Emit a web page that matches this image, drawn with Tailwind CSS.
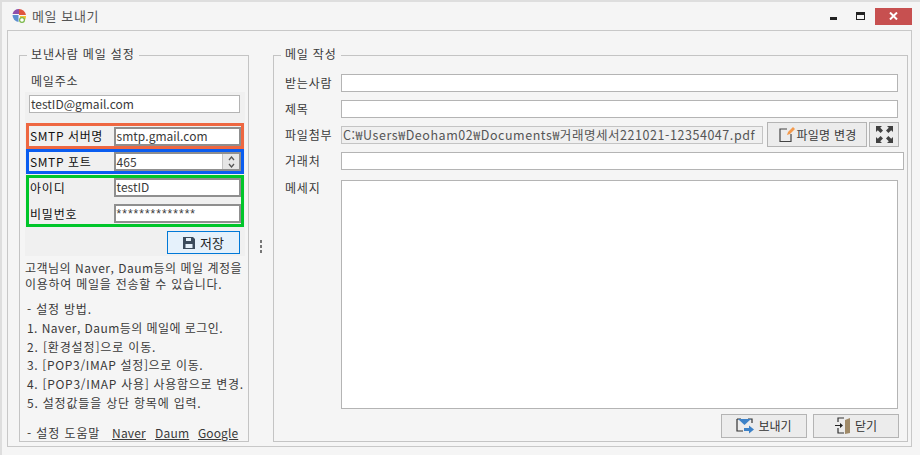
<!DOCTYPE html>
<html lang="ko">
<head>
<meta charset="UTF-8">
<title>메일 보내기</title>
<script src="https://cdn.jsdelivr.net/npm/@tailwindcss/browser@4"></script>
</head>
<body class="overflow-hidden bg-[#f5f5f5]">
<div class="flex h-[455px] w-[920px] flex-col border-2 border-b-0 border-r-0 border-[#dedede] bg-[#f5f5f5] font-['Noto_Sans_CJK_KR','Liberation_Sans',sans-serif] text-[12px] leading-[16px] text-[#3a3a3a]">

  <!-- title bar -->
  <div class="flex h-[28px] shrink-0 items-center">
    <svg class="ml-[9px] h-[16px] w-[16px]" viewBox="0 0 16 16">
      <path d="M8 1A7 7 0 0 0 1.5 6H8z" fill="#8e4fa8"/>
      <path d="M8 1A7 7 0 0 1 15 7H8z" fill="#e0553f"/>
      <path d="M1.5 7H7.5V14A7 7 0 0 1 1.5 7z" fill="#5b8fd0"/>
      <path d="M9 8H15A7 7 0 0 1 12 14H9z" fill="#f2c230"/>
      <circle cx="11" cy="12" r="2.4" fill="#fff" stroke="#79b84a" stroke-width="1.2"/>
    </svg>
    <span class="ml-[5px] text-[13px] tracking-[0.6px] text-[#555]">메일 보내기</span>
    <div class="ml-auto flex h-[17px] items-center">
      <span class="h-[3px] w-[7px] translate-y-[2px] bg-[#222]"></span>
      <span class="ml-[19px] h-[8px] w-[9px] border border-t-[3px] border-[#222]"></span>
      <span class="ml-[10px] flex h-[17px] w-[37px] items-center justify-center bg-[#c75050]">
        <svg class="h-[8px] w-[9px]" viewBox="0 0 9 8"><path d="M1 0.5L8 7.5M8 0.5L1 7.5" stroke="#fff" stroke-width="2"/></svg>
      </span>
      <span class="w-[8px]"></span>
    </div>
  </div>

  <!-- body -->
  <div class="ml-[5px] mr-[8px] flex h-[417px] w-[905px] border border-[#c8c8c8] pl-[11px] pt-[24px]">

    <!-- left group -->
    <div class="relative h-[387px] w-[230px] shrink-0 border border-[#c4c4c4]">
      <span class="absolute left-[7px] top-[-10px] bg-[#f5f5f5] px-[4px] tracking-[0.85px]">보낸사람 메일 설정</span>
      <div class="ml-[11px] mt-[17px] h-[19px] tracking-[0.8px]">메일주소</div>
      <div class="ml-[5px] h-[164px] w-[220px] bg-[#f0f0f0] pt-[3px]">
        <div class="ml-[4px] h-[18px] w-[211px] border border-[#b4b4b4] bg-white pl-[1px] leading-[16px]">testID@gmail.com</div>

        <div class="ml-[1px] mt-[10px] flex h-[26px] w-[218px] items-center border-[3px] border-[#ee6741]">
          <span class="ml-[1px] w-[84px] tracking-[0.6px] text-[#111]">SMTP 서버명</span>
          <span class="h-[19px] w-[128px] border-2 border-[#8f8f8f] bg-white pl-[1px] leading-[14px]">smtp.gmail.com</span>
        </div>
        <div class="ml-[1px] flex h-[25px] w-[218px] items-center border-[3px] border-[#0a5df0]">
          <span class="ml-[1px] w-[84px] tracking-[0.6px] text-[#111]">SMTP 포트</span>
          <span class="flex h-[19px] w-[128px] items-center border-2 border-[#8f8f8f] bg-white pl-[1px] leading-[14px]">465
            <span class="ml-auto flex h-[15px] w-[17px] flex-col items-center justify-center gap-[2px] border-l border-[#c4c4c4] bg-[#e6e6e6]">
              <svg class="h-[5px] w-[7px]" viewBox="0 0 7 5"><path d="M1 4L3.5 1L6 4" fill="none" stroke="#555" stroke-width="1.3"/></svg>
              <svg class="h-[5px] w-[7px]" viewBox="0 0 7 5"><path d="M1 1L3.5 4L6 1" fill="none" stroke="#555" stroke-width="1.3"/></svg>
            </span>
          </span>
        </div>
        <div class="ml-[1px] mt-[1px] flex h-[52px] w-[218px] flex-col gap-[7px] border-[3px] border-[#00c62a]">
          <div class="flex h-[19px] items-center">
            <span class="ml-[1px] w-[84px] tracking-[0.8px] text-[#111]">아이디</span>
            <span class="h-[19px] w-[128px] border-2 border-[#8f8f8f] bg-white pl-[1px] leading-[14px]">testID</span>
          </div>
          <div class="flex h-[19px] items-center">
            <span class="ml-[1px] w-[84px] tracking-[0.8px] text-[#111]">비밀번호</span>
            <span class="h-[19px] w-[128px] border-2 border-[#8f8f8f] bg-white pl-[1px] font-['Liberation_Sans'] leading-[17px] tracking-[1px]">**************</span>
          </div>
        </div>
        <div class="ml-[142px] mt-[4px] flex h-[23px] w-[73px] items-center justify-center gap-[5px] border border-[#0078d7] bg-[#e5f1fb]">
          <svg class="h-[12px] w-[12px]" viewBox="0 0 12 12"><path d="M0 0H10L12 2V12H0z" fill="#3b4b5c"/><rect x="3" y="1" width="5" height="3" fill="#e5f1fb"/><rect x="2.500" y="7" width="7" height="4" fill="#e5f1fb"/></svg>
          <span class="text-[13px] text-[#222]">저장</span>
        </div>
      </div>
      <div class="ml-[5px] mt-[4px] leading-[15.5px] tracking-[0.5px]">
        <p>고객님의 Naver, Daum등의 메일 계정을</p>
        <p class="tracking-[0.75px]">이용하여 메일을 전송할 수 있습니다.</p>
      </div>
      <div class="ml-[7px] mt-[9px] leading-[18.8px] tracking-[0.6px]">
        <p class="tracking-[0.8px]">- 설정 방법.</p>
        <p class="tracking-[0.45px]">1. Naver, Daum등의 메일에 로그인.</p>
        <p class="tracking-[0.85px]">2. [환경설정]으로 이동.</p>
        <p class="tracking-[0.65px]">3. [POP3/IMAP 설정]으로 이동.</p>
        <p class="whitespace-nowrap tracking-[0.7px]">4. [POP3/IMAP 사용] 사용함으로 변경.</p>
        <p class="tracking-[0.8px]">5. 설정값들을 상단 항목에 입력.</p>
        <p class="mt-[11px] flex">
          <span class="w-[85px] tracking-[0.9px]">- 설정 도움말</span>
          <span class="w-[43px] tracking-[0.2px] underline">Naver</span>
          <span class="w-[43px] tracking-[0.2px] underline">Daum</span>
          <span class="tracking-[0.1px] underline">Google</span>
        </p>
      </div>
    </div>

    <!-- splitter -->
    <div class="flex h-[387px] w-[24px] shrink-0 flex-col items-center justify-center gap-[2px] pb-[5px]">
      <span class="h-[3px] w-[2px] bg-[#777]"></span>
      <span class="h-[3px] w-[2px] bg-[#777]"></span>
      <span class="h-[3px] w-[2px] bg-[#777]"></span>
    </div>

    <!-- right group -->
    <div class="relative h-[387px] w-[635px] shrink-0 border border-[#c4c4c4]">
      <span class="absolute left-[7px] top-[-10px] bg-[#f5f5f5] px-[4px] tracking-[0.8px]">메일 작성</span>

      <div class="mt-[18px] flex h-[18px] items-center">
        <span class="ml-[11px] w-[56px] tracking-[0.8px]">받는사람</span>
        <span class="h-[18px] w-[557px] border border-[#b4b4b4] bg-white"></span>
      </div>
      <div class="mt-[8px] flex h-[18px] items-center">
        <span class="ml-[11px] w-[56px] tracking-[0.8px]">제목</span>
        <span class="h-[18px] w-[557px] border border-[#b4b4b4] bg-white"></span>
      </div>
      <div class="mt-[4px] flex h-[25px] items-center">
        <span class="ml-[11px] w-[56px] tracking-[0.8px]">파일첨부</span>
        <span class="h-[18px] w-[422px] overflow-hidden whitespace-nowrap border border-[#c4c4c4] bg-[#f0f0f0] pl-[1px] text-[12.5px] leading-[16px] tracking-[0.55px] text-[#555]">C:₩Users₩Deoham02₩Documents₩거래명세서221021-12354047.pdf</span>
        <span class="ml-[4px] flex h-[25px] w-[100px] items-center justify-center gap-[1px] border border-[#b4b4b4] bg-[#ececec]">
          <svg class="h-[17px] w-[18px]" viewBox="0 0 18 17"><path d="M9 3H2V15.500H13V8" fill="none" stroke="#444" stroke-width="1.2"/><path d="M9 9L10 6L15 1L17 3L12 8z" fill="#f39a4c"/></svg>
          <span class="tracking-[0.2px]">파일명 변경</span>
        </span>
        <span class="ml-[2px] flex h-[25px] w-[30px] items-center justify-center border border-[#b4b4b4] bg-[#ececec]">
          <svg class="h-[17px] w-[17px]" viewBox="0 0 17 17"><path d="M0 0H6L4.200 1.800L7 4.600L4.600 7L1.800 4.200L0 6zM17 0V6L15.200 4.200L12.400 7L10 4.600L12.800 1.800L11 0zM0 17V11L1.800 12.800L4.600 10L7 12.400L4.200 15.200L6 17zM17 17H11L12.800 15.200L10 12.400L12.400 10L15.200 12.800L17 11z" fill="#404040"/></svg>
        </span>
      </div>
      <div class="mt-[5px] flex h-[18px] items-center">
        <span class="ml-[11px] w-[56px] tracking-[0.8px]">거래처</span>
        <span class="h-[18px] w-[563px] border border-[#b4b4b4] bg-white"></span>
      </div>
      <div class="mt-[10px] flex">
        <span class="ml-[11px] w-[56px] tracking-[0.8px]">메세지</span>
        <span class="h-[229px] w-[557px] border border-[#b4b4b4] bg-white"></span>
      </div>
      <div class="ml-[447px] mt-[5px] flex gap-[6px]">
        <span class="flex h-[24px] w-[86px] items-center justify-center gap-[4px] border border-[#b4b4b4] bg-[#ececec]">
          <svg class="h-[16px] w-[18px]" viewBox="0 0 18 16"><path d="M1 1H5M12 1H16V5M1 1V13H7" fill="none" stroke="#333" stroke-width="1.2"/><path d="M2 1H15L8.500 7z" fill="#3d82c8"/><path d="M8 10H13V7.500L18 11.500L13 15.500V13H8z" fill="#3d82c8"/></svg>
          <span class="text-[#333]">보내기</span>
        </span>
        <span class="flex h-[24px] w-[86px] items-center justify-center gap-[4px] border border-[#b4b4b4] bg-[#ececec]">
          <svg class="h-[18px] w-[16px]" viewBox="0 0 16 18"><path d="M3 5V1H9M3 11V16H9" fill="none" stroke="#333" stroke-width="1.2"/><path d="M0 8H5V6L8 8.500L5 11V9H0z" fill="#222"/><path d="M10 3L15 1V16L10 17z" fill="#a08a68"/></svg>
          <span class="text-[#333]">닫기</span>
        </span>
      </div>
    </div>
  </div>
</div>
</body>
</html>
